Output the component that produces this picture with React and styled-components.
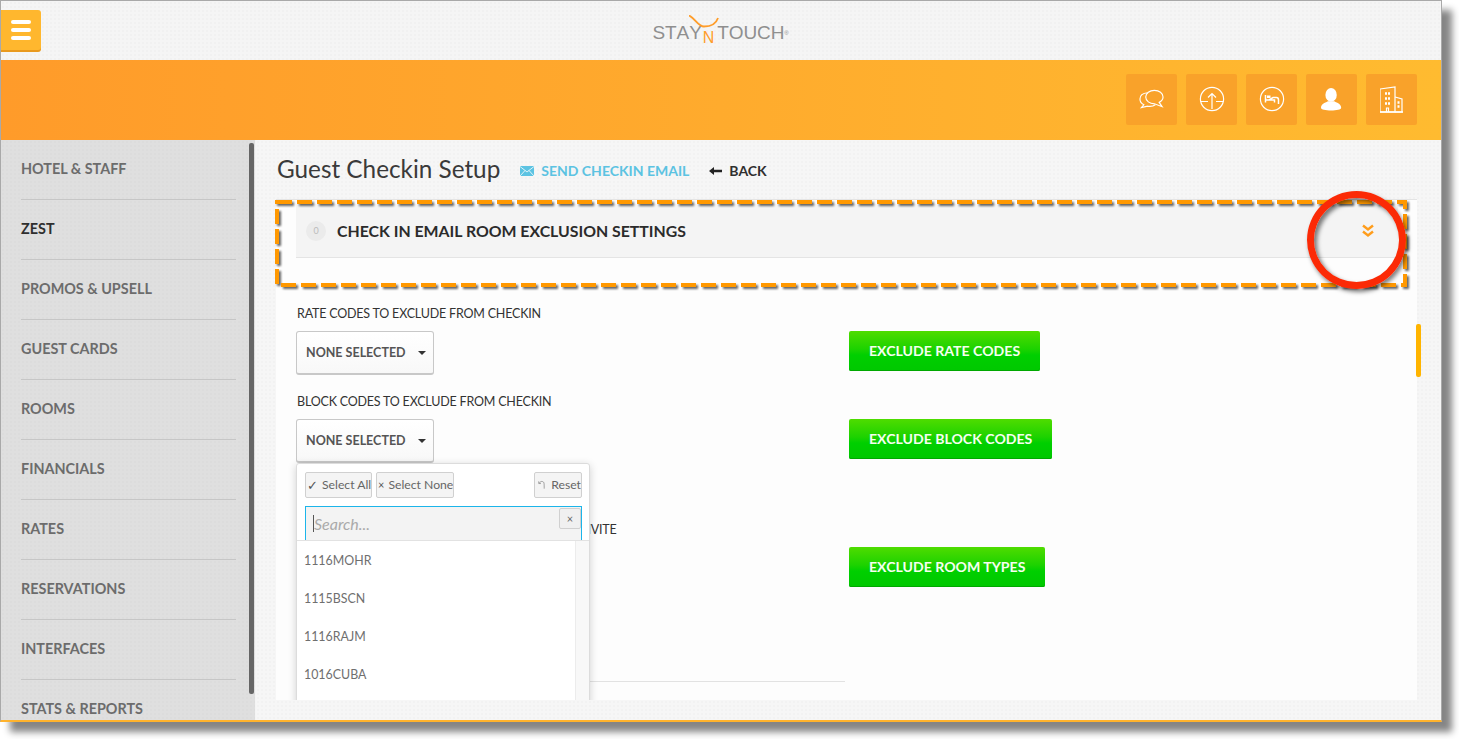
import styled, { createGlobalStyle } from "styled-components";

const texture =
  "radial-gradient(rgba(0,0,0,0.016) 1px, transparent 1px)";

const GlobalStyle = createGlobalStyle`
  html, body {
    margin: 0;
    padding: 0;
    background: #fff;
    overflow: hidden;
  }
  * {
    box-sizing: border-box;
  }
`;

const Stage = styled.div`
  width: 1459px;
  height: 739px;
  padding: 0;
  font-family: Lato, "Liberation Sans", sans-serif;
`;

const Frame = styled.div`
  position: relative;
  width: 1442px;
  height: 722px;
  border-top: 1px solid #a9a9a9;
  border-left: 1px solid #a9a9a9;
  border-right: 1px solid #a9a9a9;
  border-bottom: 2px solid #ffb32d;
  display: flex;
  flex-direction: column;
  overflow: hidden;
  background: #f5f5f5;
`;

const FrameShadow = styled.div`
  width: 1442px;
  height: 722px;
  box-shadow: 10px 10px 7px rgba(0, 0, 0, 0.48);
`;

const TopBar = styled.header`
  flex: 0 0 59px;
  display: flex;
  justify-content: center;
  align-items: center;
  position: relative;
  background-color: #f5f5f5;
  background-image: ${texture};
  background-size: 4px 4px;
`;

const MenuButton = styled.button`
  position: absolute;
  left: 0;
  top: 9px;
  width: 40px;
  height: 40px;
  padding: 0;
  border: 0;
  border-radius: 0 3px 3px 0;
  background: #ffb72e;
  box-shadow: 0 2px 0 #e99a1f;
  display: flex;
  flex-direction: column;
  justify-content: center;
  align-items: center;
  gap: 4px;
`;

const MenuLine = styled.span`
  width: 20px;
  height: 4px;
  border-radius: 2px;
  background: #fff;
`;

const Logo = styled.div`
  position: relative;
  top: 1px;
  display: flex;
  align-items: baseline;
  color: #8f8f8f;
  font-family: "Liberation Sans", sans-serif;
  font-size: 19px;
  font-kerning: none;
  letter-spacing: -0.1px;
  width: 137px;
  height: 36px;
  padding-top: 8px;
`;

const LogoN = styled.span`
  color: #ff9d2a;
  font-size: 16px;
  position: relative;
  top: 4px;
  margin: 0 3px 0 1px;
`;

const LogoCurve = styled.svg`
  position: absolute;
  left: 36px;
  top: 1px;
`;

const LogoMark = styled.sup`
  font-size: 6px;
  line-height: 0;
  position: relative;
  top: -4px;
`;

const Band = styled.div`
  flex: 0 0 80px;
  display: flex;
  justify-content: flex-end;
  align-items: center;
  gap: 9px;
  padding: 0 24px 2px 0;
  background: linear-gradient(90deg, #ff9b2a 0%, #ffbb30 100%);
`;

const BandButton = styled.button`
  width: 51px;
  height: 51px;
  padding: 0;
  border: 0;
  border-radius: 2px;
  background: #f9a22a;
  display: flex;
  justify-content: center;
  align-items: center;
`;

const Body = styled.div`
  flex: 1;
  min-height: 0;
  display: flex;
`;

const Sidebar = styled.nav`
  flex: 0 0 255px;
  position: relative;
  padding: 0 19px 0 20px;
  overflow: hidden;
  background-color: #dfdfdf;
  background-image: ${texture};
  background-size: 4px 4px;
  border-right: 1px solid #f4f4f4;
`;

const SideItem = styled.a`
  display: flex;
  align-items: center;
  height: 60px;
  padding-bottom: 3px;
  border-bottom: 1px solid #c6c6c6;
  font-size: 14.4px;
  font-weight: 700;
  color: ${(p) => (p.$active ? "#2f2f2f" : "#6c6c6c")};
`;

const SideScroll = styled.div`
  position: absolute;
  top: 3px;
  right: 1px;
  width: 5px;
  height: 551px;
  border-radius: 2px;
  background: #666;
`;

const Main = styled.main`
  flex: 1;
  min-width: 0;
  display: flex;
  flex-direction: column;
  padding: 0 24px 20px 20px;
  background-color: #f6f6f6;
  background-image: ${texture};
  background-size: 4px 4px;
`;

const TitleRow = styled.div`
  flex: 0 0 59px;
  display: flex;
  align-items: center;
  padding-top: 2px;
`;

const Title = styled.h1`
  margin: 0 20px 4px 1px;
  font-size: 24.3px;
  font-weight: 400;
  color: #3a3a3a;
`;

const MailLink = styled.a`
  display: flex;
  align-items: center;
  gap: 7px;
  font-size: 14px;
  font-weight: 700;
  color: #5cc3e2;
  margin-right: 20px;
`;

const BackLink = styled.a`
  display: flex;
  align-items: center;
  gap: 7px;
  font-size: 14px;
  font-weight: 700;
  color: #2f2f2f;
`;

const PanelWrap = styled.div`
  flex: 1;
  min-height: 0;
  position: relative;
  display: flex;
`;

const Panel = styled.section`
  flex: 1;
  min-width: 0;
  position: relative;
  overflow: hidden;
  background: #fdfdfd;
  padding: 4px 19px 0 20px;
  border-top: 1px solid #e4e4e4;
`;

const PanelHeading = styled.div`
  height: 54px;
  display: flex;
  align-items: center;
  padding: 0 23px 0 10px;
  background: #f4f4f4;
  border-bottom: 1px solid #e4e4e4;
`;

const CountBadge = styled.span`
  width: 20px;
  height: 20px;
  border-radius: 50%;
  background: #ebebeb;
  color: #bbb;
  font-size: 9px;
  display: flex;
  align-items: center;
  justify-content: center;
  margin-right: 11px;
`;

const HeadingText = styled.h2`
  margin: 0;
  flex: 1;
  font-size: 15.85px;
  font-weight: 700;
  color: #2b2b2b;
`;

const ChevronSvg = styled.svg`
  margin-top: 1px;
`;

const Form = styled.div`
  padding-top: 47px;
`;

const FormRow = styled.div`
  display: flex;
  align-items: flex-end;
  margin-bottom: ${(p) => p.$gap}px;
`;

const FieldCol = styled.div`
  flex: 0 0 553px;
`;

const FieldLabel = styled.label`
  display: block;
  height: 17px;
  line-height: 17px;
  margin-bottom: 9px;
  padding-left: 1px;
  font-size: 12.5px;
  letter-spacing: -0.2px;
  color: #333;
  white-space: nowrap;
`;

const SelectButton = styled.button`
  width: 138px;
  height: 44px;
  padding: 0 0 0 9px;
  display: flex;
  align-items: center;
  justify-content: space-between;
  background: linear-gradient(#fff, #f8f8f8);
  border: 1px solid #c8c8c8;
  border-bottom-width: 2px;
  border-radius: 3px;
  font-family: inherit;
  font-size: 12.5px;
  font-weight: 700;
  color: #555;
`;

const Caret = styled.span`
  width: 0;
  height: 0;
  margin-right: 7px;
  border-left: 4px solid transparent;
  border-right: 4px solid transparent;
  border-top: 4px solid #333;
`;

const GreenButton = styled.button`
  height: 40px;
  padding: 0 20px 2px;
  border: 0;
  border-radius: 2px;
  margin-bottom: 4px;
  background: linear-gradient(#4fdc00 0%, #1dd200 45%, #00cf00 60%, #00c800 100%);
  box-shadow: inset 0 -1px 0 #00a800;
  font-family: inherit;
  font-size: 14.1px;
  font-weight: 700;
  color: #f6fff0;
  white-space: nowrap;
`;

const Divider = styled.div`
  width: 549px;
  height: 1px;
  background: #e2e2e2;
`;

const RightScroll = styled.div`
  position: absolute;
  top: 125px;
  right: -4px;
  width: 5px;
  height: 53px;
  border-radius: 2px;
  background: #ffb400;
`;

const DropMenu = styled.div`
  position: absolute;
  left: 20px;
  top: 263px;
  width: 294px;
  height: 245px;
  background: #fff;
  border: 1px solid #dcdcdc;
  border-radius: 3px 3px 0 0;
  box-shadow: 0 2px 8px rgba(0, 0, 0, 0.18);
  overflow: hidden;
  display: flex;
  flex-direction: column;
`;

const MenuTools = styled.div`
  display: flex;
  align-items: flex-start;
  gap: 4px;
  padding: 8px 7px 0 8px;
  height: 42px;
  flex: none;
`;

const ToolButton = styled.span`
  height: 26px;
  padding: 0 0 1px ${(p) => p.$pad || 1}px;
  width: ${(p) => p.$w}px;
  margin-left: ${(p) => (p.$push ? "auto" : "0")};
  display: flex;
  align-items: center;
  gap: ${(p) => p.$gap || 4}px;
  background: #f4f4f4;
  border: 1px solid #d0d0d0;
  border-radius: 2px;
  font-size: 12.2px;
  color: #666;
  white-space: nowrap;
  overflow: hidden;
`;

const ToolGlyph = styled.span`
  flex: none;
  font-size: ${(p) => p.$size}px;
  color: #555;
`;

const SearchBox = styled.div`
  flex: none;
  position: relative;
  height: 34px;
  margin: 0 7px 0 8px;
  padding: 0 7px;
  display: flex;
  align-items: center;
  background: #f3f3f3;
  border: 1px solid #1cb5ea;
  border-bottom: 0;
  font-size: 16px;
  font-style: italic;
  color: #aaa;
`;

const Cursor = styled.span`
  width: 1px;
  height: 17px;
  background: #555;
`;

const ClearButton = styled.span`
  position: absolute;
  right: 0;
  top: 1px;
  width: 22px;
  height: 21px;
  display: flex;
  align-items: center;
  justify-content: center;
  background: #f0f0f0;
  border: 1px solid #d0d0d0;
  border-radius: 2px;
  font-style: normal;
  font-size: 11px;
  color: #666;
`;

const OptionPane = styled.div`
  flex: 1;
  min-height: 0;
  display: flex;
  border-top: 1px solid #e2e2e2;
`;

const OptionList = styled.ul`
  flex: 1;
  margin: 0;
  padding: 0;
  list-style: none;
  border-right: 1px solid #ececec;
`;

const OptionItem = styled.li`
  height: 38px;
  padding-left: 7px;
  display: flex;
  align-items: center;
  font-size: 12.4px;
  color: #6f6f6f;
`;

const OptionTrack = styled.div`
  flex: 0 0 13px;
  background: #f8f8f8;
`;

// annotation layered over the screenshot
const DashedNote = styled.svg`
  position: absolute;
  left: 274px;
  top: 198px;
  pointer-events: none;
  overflow: visible;
  filter: drop-shadow(2px 2px 1px rgba(0, 0, 0, 0.6));
`;

const NoteCircle = styled.div`
  position: absolute;
  left: 1306px;
  top: 190px;
  width: 99px;
  height: 98px;
  border: 7px solid #fb2a06;
  border-radius: 50%;
  box-shadow: 2px 3px 4px rgba(0, 0, 0, 0.5), inset 3px 3px 4px rgba(0, 0, 0, 0.5);
  pointer-events: none;
`;

const Chevrons = () => (
  <ChevronSvg width="14" height="14" viewBox="0 0 14 14" fill="none" stroke="#ff9d1c" strokeWidth="2.4">
    <path d="M2 1.5 L7 5.5 L12 1.5" />
    <path d="M2 7.5 L7 11.5 L12 7.5" />
  </ChevronSvg>
);

const ChatIcon = () => (
  <svg width="25" height="24" viewBox="0 0 26 24" fill="none" stroke="#fff" strokeWidth="1.2">
    <path d="M9 5.5 C4 6 1 8.5 1 12 C1 15 3 17 5 18 L2.5 21 L9 19.5 C12 20 15 19.5 17 18" />
    <path d="M16 3 C11 3 7 6 7 10 C7 14 11 17 16 17 L24 20 L21 15.5 C24 14 25 12 25 10 C25 6 21 3 16 3 Z" />
  </svg>
);

const UploadIcon = () => (
  <svg width="26" height="26" viewBox="0 0 26 26" fill="none" stroke="#fff" strokeWidth="1.2">
    <circle cx="13" cy="13" r="11.6" />
    <path d="M1.5 15.5 H9 M17 15.5 H24.5 M13 23 V8 M9 11.5 L13 7.5 L17 11.5" />
  </svg>
);

const BedIcon = () => (
  <svg width="26" height="26" viewBox="0 0 26 26" fill="none" stroke="#fff" strokeWidth="1.2">
    <circle cx="13" cy="13" r="11.6" />
    <path d="M6.5 9 V16.5 M6.5 14 H10 L14 11.5 H17.5 C19 11.5 19.5 12.5 19.5 14 V18 M6.5 14 H15.5 V16.5" strokeWidth="1.5" />
    <rect x="8" y="9.5" width="3.5" height="2.5" fill="#fff" stroke="none" />
  </svg>
);

const UserIcon = () => (
  <svg width="22" height="25" viewBox="1 0 24 26" fill="#fff">
    <ellipse cx="12" cy="8" rx="6.2" ry="7.5" />
    <path d="M1 22 C1 18 5 17 8.5 15 L15.5 15 C19 17 23 18 23 22 C23 24 18 25 12 25 C6 25 1 24 1 22 Z" />
  </svg>
);

const HotelIcon = () => (
  <svg width="24" height="27" viewBox="1 0 24 27" fill="none" stroke="#fff" strokeWidth="1.2">
    <path d="M1 3 L16 1 V26 H1 Z" />
    <path d="M16 11 L23 13 V26 H16" />
    <path d="M6 7.5 H11 M6 12.5 H11 M6 17.5 H11 M18.5 16.5 H21 M18.5 20.5 H21" strokeWidth="2.6" strokeDasharray="2 1" />
    <path d="M7.5 26 V22 H9.5 V26" />
    <path d="M0 26 H24" strokeWidth="1.6" />
  </svg>
);

const MailIcon = () => (
  <svg width="14" height="10" viewBox="0 0 14 10">
    <rect width="14" height="10" fill="#5cc3e2" />
    <path d="M0 0.5 L7 6 L14 0.5 M0 10 L5 4.5 M14 10 L9 4.5" stroke="#fff" strokeWidth="0.8" fill="none" />
  </svg>
);

const BackArrow = () => (
  <svg width="13" height="8" viewBox="0 0 13 8" fill="#222">
    <path d="M0 4 L5 0 V2.7 H13 V5.3 H5 V8 Z" />
  </svg>
);

const ResetIcon = () => (
  <svg width="10" height="14" viewBox="0 0 10 14" fill="none" stroke="#777" strokeWidth="0.9">
    <path d="M2 4 C3 2 6 1.5 7.5 3 C8.5 4 8.5 6 8.5 12 M1 2 V5 H4" />
  </svg>
);

const menuItems = [
  "HOTEL & STAFF",
  "ZEST",
  "PROMOS & UPSELL",
  "GUEST CARDS",
  "ROOMS",
  "FINANCIALS",
  "RATES",
  "RESERVATIONS",
  "INTERFACES",
  "STATS & REPORTS",
];

const bandIcons = [ChatIcon, UploadIcon, BedIcon, UserIcon, HotelIcon];

const rows = [
  { label: "RATE CODES TO EXCLUDE FROM CHECKIN", button: "EXCLUDE RATE CODES", gap: 18 },
  { label: "BLOCK CODES TO EXCLUDE FROM CHECKIN", button: "EXCLUDE BLOCK CODES", gap: 58 },
  { label: "ROOM TYPES TO EXCLUDE FROM THE CHECK-IN INVITE", button: "EXCLUDE ROOM TYPES", gap: 90 },
];

const options = ["1116MOHR", "1115BSCN", "1116RAJM", "1016CUBA"];

function App() {
  return (
    <Stage>
      <GlobalStyle />
      <FrameShadow>
        <Frame>
          <TopBar>
            <MenuButton aria-label="Menu">
              <MenuLine />
              <MenuLine />
              <MenuLine />
            </MenuButton>
            <Logo>
              <LogoCurve width="32" height="20" viewBox="0 0 32 20" fill="none" stroke="#ff9d2a" strokeWidth="1.8">
                <path d="M0 0.5 C6 3 9 11.5 15 11.5 C22 11.5 27 9 29 3" />
              </LogoCurve>
              STAY<LogoN>N</LogoN>TOUCH<LogoMark>®</LogoMark>
            </Logo>
          </TopBar>
          <Band>
            {bandIcons.map((Icon, i) => (
              <BandButton key={i}>
                <Icon />
              </BandButton>
            ))}
          </Band>
          <Body>
            <Sidebar>
              {menuItems.map((item) => (
                <SideItem key={item} $active={item === "ZEST"}>
                  {item}
                </SideItem>
              ))}
              <SideScroll />
            </Sidebar>
            <Main>
              <TitleRow>
                <Title>Guest Checkin Setup</Title>
                <MailLink>
                  <MailIcon />
                  SEND CHECKIN EMAIL
                </MailLink>
                <BackLink>
                  <BackArrow />
                  BACK
                </BackLink>
              </TitleRow>
              <PanelWrap>
                <Panel>
                  <PanelHeading>
                    <CountBadge>0</CountBadge>
                    <HeadingText>CHECK IN EMAIL ROOM EXCLUSION SETTINGS</HeadingText>
                    <Chevrons />
                  </PanelHeading>
                  <Form>
                    {rows.map((row) => (
                      <FormRow key={row.button} $gap={row.gap}>
                        <FieldCol>
                          <FieldLabel>{row.label}</FieldLabel>
                          <SelectButton>
                            NONE SELECTED
                            <Caret />
                          </SelectButton>
                        </FieldCol>
                        <GreenButton>{row.button}</GreenButton>
                      </FormRow>
                    ))}
                    <Divider />
                  </Form>
                  <DropMenu>
                    <MenuTools>
                      <ToolButton $w={67} $gap={4}>
                        <ToolGlyph $size={13}>✓</ToolGlyph>
                        Select All
                      </ToolButton>
                      <ToolButton $w={78}>
                        <ToolGlyph $size={11}>×</ToolGlyph>
                        Select None
                      </ToolButton>
                      <ToolButton $w={48} $pad={3} $push $gap={6}>
                        <ResetIcon />
                        Reset
                      </ToolButton>
                    </MenuTools>
                    <SearchBox>
                      <Cursor />
                      Search...
                      <ClearButton>×</ClearButton>
                    </SearchBox>
                    <OptionPane>
                      <OptionList>
                        {options.map((o) => (
                          <OptionItem key={o}>{o}</OptionItem>
                        ))}
                      </OptionList>
                      <OptionTrack />
                    </OptionPane>
                  </DropMenu>
                </Panel>
                <RightScroll />
              </PanelWrap>
            </Main>
          </Body>
          <DashedNote width="1133" height="90" fill="none">
            <rect x="2" y="3" width="1128" height="83" stroke="#ff9800" strokeWidth="4" strokeDasharray="15 5" />
          </DashedNote>
          <NoteCircle />
        </Frame>
      </FrameShadow>
    </Stage>
  );
}

export default App;
